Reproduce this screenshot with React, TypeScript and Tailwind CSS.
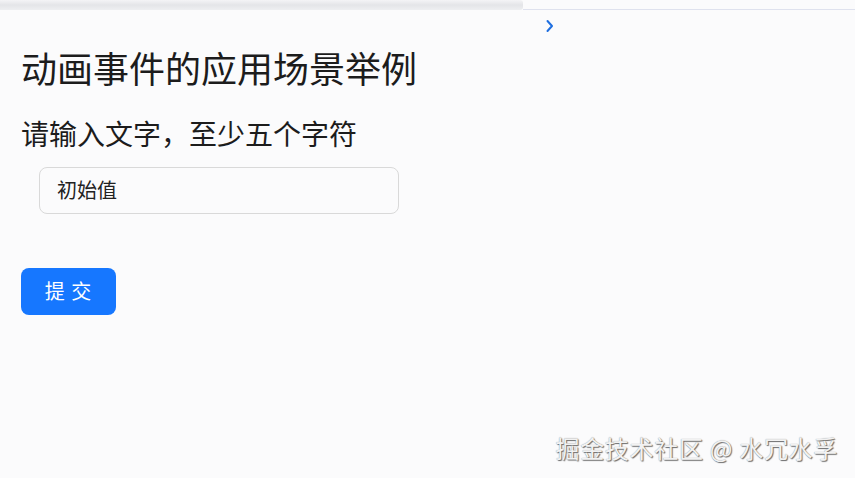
import React from "react";

export default function App() {
  const font = { fontFamily: '"Noto Sans CJK SC", "Noto Sans", sans-serif' };
  return (
    <div className="relative w-[855px] h-[478px] bg-[#fbfbfc] overflow-hidden" style={font}>
      <div className="flex h-[10px]">
        <div className="w-[523px] h-[10px] bg-gradient-to-b from-[#f4f4f6] via-[#e4e5e8] to-[#eeeff1] rounded-r-[3px]" />
        <div className="flex-1 border-b border-[#dfe2ee]" />
      </div>
      <svg className="absolute left-[545px] top-[19px]" width="10" height="14" viewBox="0 0 10 14">
        <path d="M2.5 2 L7 7 L2.5 12" fill="none" stroke="#1f6fe0" strokeWidth="2" strokeLinecap="round" strokeLinejoin="round" />
      </svg>
      <div className="pl-[21px] pt-[36px]">
        <h1 className="text-[36px] leading-[1.2] text-[#1c1c1c] font-normal">动画事件的应用场景举例</h1>
        <h2 className="mt-[28px] text-[28px] leading-[1.2] text-[#1c1c1c] font-normal">请输入文字，至少五个字符</h2>
        <div className="mt-[16px] ml-[18px] w-[360px] h-[47px] border border-[#d9d9d9] rounded-[8px] flex items-center pl-[17px] text-[20px] text-[#222]">
          初始值
        </div>
        <button className="mt-[54px] w-[95px] h-[47px] bg-[#1677ff] rounded-[8px] text-white text-[20px] tracking-[1px] flex items-center justify-center">
          提 交
        </button>
      </div>
      <div
        className="absolute right-[17px] bottom-[15px] text-[24px] leading-[1.2] text-[#f2f2f2] tracking-[0.7px]"
        style={{ textShadow: "1px 1px 1px #6b6b6b, 0 0 1px #888" }}
      >
        掘金技术社区 @ 水冗水孚
      </div>
    </div>
  );
}
